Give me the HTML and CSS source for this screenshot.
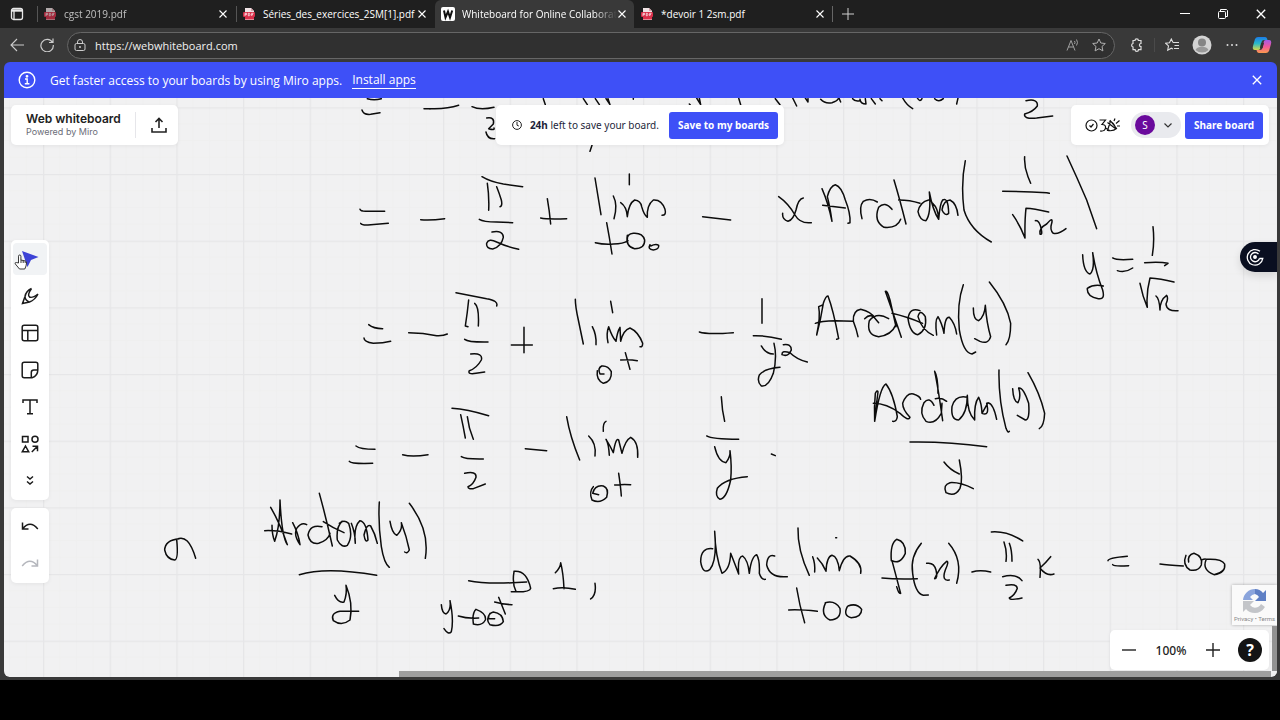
FILE: index.html
```html
<!DOCTYPE html>
<html lang="en">
<head>
    <meta charset="UTF-8">
    <meta name="viewport" content="width=device-width, initial-scale=1.0">
    <title>Whiteboard for Online Collaboration</title>
    <link rel="stylesheet" href="styles.css">
</head>
<body>
    <!-- Shared symbols -->
    <svg class="symbols" aria-hidden="true">
        <symbol id="pdf" viewBox="0 0 14 14">
            <path d="M3 1h6l3 3v9H3z" fill="#f0e4e6"/>
            <path d="M9 1l3 3H9z" fill="#d9a3ab"/>
            <rect x="1" y="5" width="12" height="5" rx="1" fill="#d9304a"/>
            <path d="M3 9V6.300h1.500v1.400H3M6.300 6.300v2.500h1l.6-.6V7l-.6-.7zM9.700 9V6.300h1.800M9.700 7.600h1.300" fill="none" stroke="#fff" stroke-width=".7"/>
            <path d="M3 10h9v2.500H3z" fill="#d9304a"/>
        </symbol>
        <symbol id="cross" viewBox="0 0 10 10">
            <path d="M1.500 1.500l7 7M8.500 1.500l-7 7" fill="none" stroke="currentColor" stroke-width="1.100"/>
        </symbol>
    </svg>

    <div class="browser">
        <div class="tab-strip">
            <button class="tab-menu" aria-label="Tab actions">
                <svg width="14" height="14" viewBox="0 0 14 14" fill="none" stroke="#e8e8e8" stroke-width="1.300"><rect x="1.500" y="1.500" width="11" height="11" rx="2"/><path d="M2 3.500h10" stroke-width="2.400"/><path d="M4 4v8"/></svg>
            </button>
            <div class="tab tab-dim">
                <svg class="favicon"><use href="#pdf"/></svg>
                <span class="tab-title">cgst 2019.pdf</span>
                <button class="tab-close" aria-label="Close tab"><svg width="10" height="10"><use href="#cross"/></svg></button>
            </div>
            <div class="tab">
                <svg class="favicon"><use href="#pdf"/></svg>
                <span class="tab-title">Séries_des_exercices_2SM[1].pdf</span>
                <button class="tab-close" aria-label="Close tab"><svg width="10" height="10"><use href="#cross"/></svg></button>
            </div>
            <div class="tab tab-active">
                <svg class="favicon" viewBox="0 0 14 14"><rect width="14" height="14" rx="2" fill="#fff"/><path d="M3 3.500l1.500 7L7 4.500l2 6L11.200 3.500" fill="none" stroke="#111" stroke-width="2"/></svg>
                <span class="tab-title tab-fade">Whiteboard for Online Collaborat</span>
                <button class="tab-close" aria-label="Close tab"><svg width="10" height="10"><use href="#cross"/></svg></button>
            </div>
            <div class="tab tab-last">
                <svg class="favicon"><use href="#pdf"/></svg>
                <span class="tab-title">*devoir 1 2sm.pdf</span>
                <button class="tab-close" aria-label="Close tab"><svg width="10" height="10"><use href="#cross"/></svg></button>
            </div>
            <button class="new-tab" aria-label="New tab">
                <svg width="12" height="12" viewBox="0 0 12 12" stroke="#d0d0d0"><path d="M6 0v12M0 6h12"/></svg>
            </button>
            <div class="window-controls">
                <button aria-label="Minimize"><svg width="10" height="10" stroke="#fff"><path d="M0 4.500h10"/></svg></button>
                <button aria-label="Restore"><svg width="10" height="10" fill="none" stroke="#fff"><rect x=".5" y="2.500" width="7" height="7" rx="1"/><path d="M2.500 2V.5h6l1 1v6H8"/></svg></button>
                <button aria-label="Close window"><svg width="12" height="12"><use href="#cross"/></svg></button>
            </div>
        </div>

        <div class="toolbar">
            <button aria-label="Back"><svg width="14" height="14" viewBox="0 0 14 14" fill="none" stroke="#ccc" stroke-width="1.100"><path d="M14 7H1M7 1L1 7l6 6"/></svg></button>
            <button aria-label="Refresh"><svg width="14" height="14" viewBox="0 0 14 14" fill="none" stroke="#ccc" stroke-width="1.200"><path d="M12.500 4.500A6.200 6.200 0 1 0 13.300 7M13 .5v4H9"/></svg></button>
            <div class="address">
                <svg width="12" height="12" viewBox="0 0 12 12" fill="none" stroke="#ccc"><rect x="1" y="4.500" width="10" height="7" rx="1.500"/><path d="M3.500 4.500V3a2.500 2.500 0 0 1 5 0v1.500"/><circle cx="6" cy="8" r=".6" fill="#ccc"/></svg>
                <input class="url" type="text" value="https://webwhiteboard.com" aria-label="Address">
                <button aria-label="Read aloud"><svg width="14" height="14" viewBox="0 0 14 14" fill="none" stroke="#a0a0a0"><path d="M1 12.500L5 2.500l4 10M2.500 9h5M8.500 3q1 1.500 0 3M10.500 1.500q2 3 0 6"/></svg></button>
                <button aria-label="Add to favorites"><svg width="14" height="14" viewBox="0 0 14 14" fill="none" stroke="#b0b0b0"><path d="M7 1l1.800 4 4.500.5-3.300 3 .9 4.400L7 10.700l-3.900 2.200L4 8.500l-3.300-3L5.200 5z"/></svg></button>
            </div>
            <button aria-label="Extensions"><svg width="14" height="14" viewBox="0 0 14 14" fill="none" stroke="#ddd" stroke-width="1.200"><path d="M3 2.500h2a1.700 1.700 0 0 1 3.400 0H11v3a1.600 1.600 0 0 0 0 3.200v3H8.500a1.700 1.700 0 0 1-3.400 0H3V9a1.800 1.800 0 0 1 0-3.500z"/></svg></button>
            <span class="divider"></span>
            <button aria-label="Favorites"><svg width="14" height="14" viewBox="0 0 14 14" fill="none" stroke="#ddd" stroke-width="1.100"><path d="M8 4.500h6M9.500 7.500H14M9 10.500h5M8 4.500L6.300 1 4.500 4.700.6 5.200l2.900 2.700-.8 4.300 3.600-2L8 11"/></svg></button>
            <button aria-label="Profile"><svg width="20" height="20" viewBox="0 0 20 20"><circle cx="10" cy="10" r="9.500" fill="#d4d4d4"/><circle cx="10" cy="7.500" r="4" fill="#858585"/><path d="M3.500 15a7 5 0 0 1 13 0 9.500 9.500 0 0 1-13 0" fill="#999"/></svg></button>
            <button aria-label="Settings and more"><svg width="12" height="4" fill="#ddd"><circle cx="1.500" cy="2" r="1"/><circle cx="6" cy="2" r="1"/><circle cx="10.500" cy="2" r="1"/></svg></button>
            <button aria-label="Copilot">
                <svg width="20" height="20" viewBox="0 0 20 20">
                    <defs>
                        <linearGradient id="cool" x2="0" y2="1"><stop offset="0" stop-color="#1c7be8"/><stop offset=".5" stop-color="#29b9c9"/><stop offset="1" stop-color="#d8d94a"/></linearGradient>
                        <linearGradient id="warm" x2="0" y2="1"><stop offset="0" stop-color="#a25be8"/><stop offset=".5" stop-color="#f0589c"/><stop offset="1" stop-color="#fb9a4b"/></linearGradient>
                    </defs>
                    <path d="M6 2h7q2 0 2.500 3H12q-2 0-2.500 2L8 14q-.5 1-2 1H3q-3 0-2-4l2-7q1-2 3-2" fill="url(#cool)"/>
                    <path d="M14 18H7q-2 0-2.500-3H8q2 0 2.500-2L12 6q.5-1 2-1h3q3 0 2 4l-2 7q-1 2-3 2" fill="url(#warm)"/>
                    <path d="M9 8h3l-1.500 5H8z" fill="#333"/>
                </svg>
            </button>
        </div>

        <div class="page">
            <div class="banner">
                <svg width="18" height="18" viewBox="0 0 18 18" fill="none" stroke="#fff" stroke-width="1.400"><circle cx="9" cy="9" r="7.800"/><path d="M7 8h2.200v4.500M6.800 12.700h4.600"/><circle cx="9" cy="5.300" r=".7" fill="#fff"/></svg>
                <span>Get faster access to your boards by using Miro apps.</span>
                <a class="install" href="#">Install apps</a>
                <button class="banner-close" aria-label="Dismiss"><svg width="12" height="12"><use href="#cross"/></svg></button>
            </div>

            <main class="board">
                <!-- Grid and pen strokes, three units to the pixel -->
                <svg class="canvas" role="img" aria-label="Handwritten limit calculation">
                    <g transform="translate(-4 -98) scale(.33333)">
                        <pattern id="grid" x="129" y="122" width="200" height="200" patternUnits="userSpaceOnUse">
                            <path d="M50 0V200M100 0V200M150 0V200M0 50H200M0 100H200M0 150H200" stroke="#efefef" stroke-width="3"/>
                            <path d="M2 0V200M0 2H200" stroke="#e6e6e8" stroke-width="4"/>
                        </pattern>
                        <rect width="6000" height="4000" fill="url(#grid)"/>

                        <g class="ink">
                            <!-- line scrolled under the header -->
                            <path d="M1102 296Q1122 302 1144 296M1086 330Q1090 345 1112 343L1140 338M1272 326H1290"/>
                            <g transform="translate(1290 0)">
                                <path d="M0 326Q50 328 86 316M126 320Q150 332 192 322M170 354Q195 350 190 372L176 386Q195 392 192 384M168 396Q172 418 194 416"/>
                                <path d="M340 296L346 314M460 296L472 314M496 296L508 314M528 296L540 314L534 296M610 294V298M778 312l3 3M800 294L812 314L808 294M926 294L932 314M1036 296L1050 314M1088 294L1100 318M1126 294L1134 306V296M1172 298Q1185 312 1206 308Q1226 302 1226 292L1232 306M1268 296Q1276 306 1290 302M486 436L480 454"/>
                            </g>
                            <g transform="translate(2580 0)">
                                <path d="M0 298Q2 312 18 312L16 296M34 296L46 312M60 296L66 302M128 294Q140 316 158 326M172 294Q180 308 186 296M224 296Q236 308 250 296M294 294L290 312"/>
                                <path d="M498 302Q535 295 532 318Q520 335 494 342Q490 358 530 354L578 348"/>
                            </g>

                            <!-- lines 1 and 2, left half -->
                            <g transform="translate(1020 450)">
                                <path d="M60 178Q62 184 76 184L134 184M62 220Q66 226 84 225L145 220M242 209Q270 212 314 206"/>
                                <path d="M426 80Q450 95 490 102L548 110M442 100Q448 140 446 181M470 110Q478 130 484 150Q488 168 480 170M418 208Q430 216 470 216L518 218"/>
                                <path d="M456 246Q490 240 490 262Q484 290 458 297Q438 296 440 280Q446 264 470 276Q500 290 536 298M622 146Q628 180 632 222M602 204Q620 208 680 206"/>
                                <path d="M765 84L783 194M820 138Q834 165 822 206M868 72V104M842 158Q860 170 862 200Q866 160 884 150Q902 152 905 170Q912 195 922 202Q920 165 940 150Q965 148 975 178Q980 196 966 196"/>
                                <path d="M800 218Q808 260 816 312M766 278Q790 284 820 282Q850 282 864 272M862 256Q856 290 884 296Q915 296 914 270Q908 248 880 250Q860 252 862 270M930 284Q922 298 940 300Q958 298 956 286Q948 280 932 288"/>
                                <path d="M86 524Q100 536 128 536M72 564Q72 576 100 580Q130 580 152 574M206 548Q250 548 290 557Q310 558 322 552"/>
                                <path d="M348 428Q400 438 440 446Q476 452 470 468M386 450Q382 490 376 528L384 530M404 460Q418 470 415 528M374 568Q385 577 444 576M392 612Q430 608 424 630Q410 655 388 662Q382 674 408 670L434 666M552 532V608M514 585H577"/>
                                <path d="M706 448Q706 470 715 510L730 582M757 530Q770 555 768 584M812 454L818 488M804 578Q798 550 806 530Q816 560 828 574Q832 545 840 532L842 574Q850 540 870 534Q895 545 908 580Q908 592 900 590"/>
                                <path d="M856 608L870 658M842 630Q870 628 892 632M772 662Q768 690 790 700Q816 695 814 665Q804 646 785 648Q772 655 780 672L792 672"/>
                            </g>

                            <!-- lines 1 and 2, right half -->
                            <g transform="translate(2070 450)">
                                <path d="M38 200L122 210M266 140Q295 160 315 195Q330 222 364 218M340 144Q325 146 318 180Q310 210 294 214Q276 208 278 190"/>
                                <path d="M396 116Q415 160 426 214Q420 170 412 140Q420 108 436 104Q455 110 466 150Q482 190 480 218L474 220M398 166L466 174M516 206Q506 170 520 154Q540 142 562 156"/>
                                <path d="M606 178Q584 152 566 172Q550 214 582 232Q622 236 632 208M612 90Q630 150 648 222M626 150Q660 150 690 160"/>
                                <path d="M716 150Q690 155 684 185Q690 212 708 212Q724 190 718 126Q728 180 746 208M728 160Q745 175 746 208Q750 160 758 150Q775 140 776 190Q765 200 756 180Q760 152 780 150Q800 160 804 196"/>
                                <path d="M826 32Q812 100 822 180Q840 240 904 276M1004 20Q1002 50 1014 80L1022 100M938 124Q1010 124 1070 128L1078 130M968 194Q990 225 1005 264Q1004 210 1008 175Q1030 176 1076 186"/>
                                <path d="M28 546Q50 554 130 548M216 446V520M190 557Q230 556 274 568M214 588Q228 612 250 612M252 580Q262 620 250 670Q235 712 214 708Q200 695 208 675Q225 655 270 652M280 584Q304 580 304 600Q295 622 276 614Q275 600 300 608Q320 628 352 636"/>
                                <path d="M386 470Q392 500 380 555Q392 510 400 460Q408 436 414 438Q430 480 446 566L440 568M386 470L398 465M376 520Q400 508 490 514M504 560Q500 540 490 514Q488 482 512 478Q544 486 554 504L566 518"/>
                                <path d="M524 506Q540 490 552 502M596 506Q560 484 538 512Q528 556 566 560Q604 556 618 524M634 562Q620 520 586 424Q592 420 600 450L618 530M606 490Q650 500 698 520"/>
                                <path d="M690 482Q660 470 654 505Q660 550 684 554Q712 540 706 500Q690 475 684 500Q695 540 730 556M740 555Q734 510 744 500Q756 520 762 550Q764 500 778 502Q795 520 800 552"/>
                                <path d="M820 404Q800 460 808 540Q820 610 846 612L857 606M850 474Q850 510 866 512Q884 500 886 466Q890 520 902 560Q895 584 870 574L854 566M898 396Q950 460 962 520Q962 570 948 584"/>
                            </g>
                            <g transform="translate(3060 450)">
                                <path d="M46 212Q58 210 64 238Q68 256 60 252Q56 235 80 222Q98 200 96 216Q88 240 100 250Q115 254 138 236M141 18Q170 80 200 150L230 236"/>
                                <path d="M188 314Q190 365 210 372Q225 360 218 308Q228 370 248 420Q256 450 235 446Q200 440 202 415Q220 402 250 408M278 324Q290 332 338 328M292 362Q315 370 338 354"/>
                                <path d="M399 230Q404 275 397 316M374 338Q420 334 444 340L434 347M360 400Q368 440 382 472Q378 430 390 384Q420 386 462 396M408 438Q418 445 420 480Q420 450 440 436Q446 445 438 462Q440 485 474 482"/>
                            </g>

                            <!-- line 3, left half -->
                            <g transform="translate(1020 1170)">
                                <path d="M48 168Q60 178 105 178M28 214Q32 222 98 220M188 194Q215 202 264 194M336 55Q380 58 446 77M362 74Q370 110 376 144M382 80Q386 115 400 148M364 200Q375 208 430 207M374 250Q410 242 408 262Q400 285 384 290Q384 298 400 296L436 282M556 176L620 182"/>
                                <path d="M680 80Q690 140 719 210M746 138Q770 160 765 198M798 94Q788 98 790 124M808 196Q806 160 798 148Q812 170 820 188Q828 140 836 150Q842 175 846 190Q856 150 872 142Q896 155 893 202"/>
                                <path d="M836 250Q842 290 844 318M824 285Q850 282 872 284M760 290Q746 305 756 330Q780 342 800 322Q808 295 790 288Q765 284 758 310L776 314"/>
                                <path d="M1144 20Q1146 60 1154 94M1100 138Q1115 148 1196 148M1124 170Q1134 215 1158 218Q1172 200 1170 182Q1176 230 1172 270Q1160 325 1140 328Q1124 320 1132 295Q1155 265 1222 260"/>
                            </g>

                            <!-- line 3, right half, and the conclusion -->
                            <g transform="translate(2040 1080)">
                                <path d="M274 282L286 287M584 184Q582 140 586 100Q592 88 594 96Q588 140 584 184Q600 80 618 72Q640 100 652 170Q650 186 638 184M580 130Q620 130 660 160Q685 185 690 172Q668 150 668 130Q680 98 700 102Q720 108 722 118"/>
                                <path d="M762 136Q748 108 732 128Q716 160 738 184Q764 196 784 160L786 130M764 34Q774 80 788 182M764 34Q774 50 774 100M766 116Q785 112 800 124"/>
                                <path d="M862 112Q826 104 816 140Q812 180 836 180Q862 160 862 106Q862 160 884 180Q882 130 896 112Q905 130 906 160Q912 150 924 128Q940 130 950 178M906 160Q930 170 920 130"/>
                                <path d="M957 30Q955 120 978 205Q984 220 988 214M998 86Q1000 125 1014 128Q1024 110 1016 84Q1030 80 1046 130Q1050 180 1036 180L1012 166M1044 38Q1080 100 1094 160Q1092 200 1078 206"/>
                                <path d="M690 246Q800 244 920 260M792 306Q810 330 838 342M838 300Q850 360 840 385Q825 412 798 398Q788 375 810 368Q840 366 880 386"/>
                                <path d="M98 566Q62 562 62 605Q68 645 90 628Q112 600 104 514Q106 590 126 640Q150 630 152 580Q160 600 176 642Q172 590 188 588Q204 600 208 640Q214 590 230 584Q240 600 238 640Q244 660 256 658M284 588Q262 580 260 615Q270 655 322 650"/>
                                <path d="M354 504Q352 570 388 646M398 590Q406 610 404 636M467 533h3M412 594Q428 610 438 634Q440 590 456 586Q474 590 478 632Q490 585 510 588Q548 610 542 640"/>
                                <path d="M350 684Q358 735 374 788M326 750Q360 748 412 754M436 730Q420 765 450 780Q485 778 480 745Q465 720 436 728M502 740Q488 768 514 773Q545 772 545 748Q530 728 504 738"/>
                                <path d="M634 602Q630 550 650 538Q678 545 676 580Q660 615 636 602L662 700Q656 702 650 680M606 654Q650 658 712 656M724 550Q690 590 698 640Q705 700 730 706L745 705"/>
                                <path d="M740 610Q762 606 768 630Q774 656 764 656Q780 620 800 604Q808 604 796 630Q784 664 808 660M806 550Q850 600 830 670M876 636Q900 628 932 636"/>
                                <path d="M934 516Q980 512 1028 543M972 546Q982 575 978 604M988 550Q996 570 996 604M968 650Q1010 640 1026 662M978 676Q1010 670 1012 685Q1005 705 988 714Q990 722 1026 714M1074 598Q1084 605 1080 652M1112 590Q1100 605 1080 624Q1100 650 1122 642"/>
                            </g>
                            <g transform="translate(3120 1590)">
                                <path d="M204 92Q205 84 262 79M218 104Q222 110 266 107M360 102Q380 105 430 108M446 96Q442 75 462 70Q490 80 484 105Q475 125 450 120Q426 105 438 76M484 90Q500 84 498 90Q486 120 522 134Q558 128 554 102Q545 85 498 88"/>
                            </g>

                            <!-- bottom left -->
                            <g transform="translate(420 1440)">
                                <path d="M118 176Q75 180 74 210Q80 238 104 240Q116 238 110 178Q145 160 167 235"/>
                                <path d="M392 82Q420 130 442 194Q425 170 420 60Q420 140 404 184Q396 165 396 136M374 152Q410 150 455 162M458 128Q475 160 480 194Q460 165 470 145Q485 125 500 134"/>
                                <path d="M546 140Q510 132 504 165Q510 194 536 190Q565 180 570 160M538 40Q560 120 577 198M550 125Q580 145 612 158M606 124Q588 140 592 180Q605 205 622 196Q640 170 626 130Q612 118 598 130"/>
                                <path d="M634 130Q646 160 646 190Q640 140 660 122Q680 125 684 180Q676 190 672 165Q680 130 692 138Q705 160 712 190M718 66Q714 130 724 200Q732 250 748 262M750 124Q756 160 770 166Q788 150 784 128Q800 170 808 210Q802 222 794 216M808 70Q870 150 856 235"/>
                                <path d="M478 284Q560 260 710 286M584 346Q596 370 612 366Q622 340 618 316Q640 370 630 420Q605 440 580 422Q570 400 600 394L656 394"/>
                                <path d="M986 302Q1040 314 1160 306M1122 276Q1116 310 1128 334M1122 274Q1160 270 1172 325Q1170 338 1114 335M1246 278Q1262 262 1262 248Q1270 280 1272 326M1240 326Q1270 320 1306 328M1365 310Q1370 345 1352 357"/>
                                <path d="M904 374Q906 400 918 402Q934 390 930 362Q942 420 934 455Q925 466 912 446M955 408Q980 416 1016 414M1000 430Q996 400 1008 388Q1040 400 1036 420Q1025 440 1000 432M1050 400Q1036 420 1050 434Q1080 442 1090 425Q1088 400 1060 396Q1044 400 1046 416L1064 416M1076 352L1096 402M1064 366Q1090 374 1116 374"/>
                            </g>
                        </g>
                    </g>
                </svg>

                <header class="board-header">
                    <div class="panel title-panel">
                        <div class="board-name">
                            <h1>Web whiteboard</h1>
                            <p>Powered by Miro</p>
                        </div>
                        <button class="export" aria-label="Export">
                            <svg width="16" height="16" viewBox="0 0 16 16" fill="none" stroke="#222" stroke-width="1.600"><path d="M8 11V1.500M4.500 5L8 1.500 11.500 5M1 11v4h14v-4"/></svg>
                        </button>
                    </div>
                    <div class="panel save-panel">
                        <svg width="10" height="10" viewBox="0 0 10 10" fill="none" stroke="#222"><circle cx="5" cy="5" r="4.400"/><path d="M5 2v3.200l1.800.8"/></svg>
                        <span class="save-text"><b>24h</b> left to save your board.</span>
                        <button class="btn-primary">Save to my boards</button>
                    </div>
                    <div class="panel share-panel">
                        <button class="facilitation" aria-label="Timer, reactions and more">
                            <svg width="36" height="16" viewBox="0 0 36 16" fill="none" stroke="#111" stroke-width="1.200">
                                <circle cx="6.500" cy="8.500" r="5.500"/><path d="M4.500 8.500l1.500 1.500L8.500 7"/>
                                <path d="M14.500 3h6l-3.500 4.500q4 0 3.500 3.500T15 14"/>
                                <path d="M22.500 13.500q6 1 9-2l-6-7.500zM22.500 5.500L31 12M20.500 11l4 2.500M24 4q5 1 6.500 7M29 4l1-2.500M31 6.500l3.500-3M32 9h3"/>
                            </svg>
                        </button>
                        <button class="user">
                            <span class="avatar">S</span>
                            <svg width="8" height="5" fill="none" stroke="#333" stroke-width="1.200"><path d="M.5.5L4 4 7.500.5"/></svg>
                        </button>
                        <button class="btn-primary">Share board</button>
                    </div>
                </header>

                <nav class="tools">
                    <div class="panel tool-group">
                        <button class="selected" aria-label="Select"><svg width="18" height="18" viewBox="0 0 18 18"><path d="M1 1l16.500 6-7.500 3-3.500 7z" fill="#3d43d6"/></svg></button>
                        <button aria-label="Pen"><svg viewBox="0 0 18 18"><path d="M10.500 1.500Q5 4 4 9.500L1.500 16.500 8.500 15Q14 13 17 7M4 9.500Q4 13 8 15M10.500 1.500Q6 8 8.500 10Q11 11.500 17 7"/></svg></button>
                        <button aria-label="Templates"><svg viewBox="0 0 18 18"><rect x="1.200" y="1.200" width="15.600" height="15.600" rx="2"/><path d="M1 6.500h16M6.800 6.500V17"/></svg></button>
                        <button aria-label="Sticky note"><svg viewBox="0 0 18 18"><path d="M16.800 9V3.200q0-2-2-2H3.200q-2 0-2 2v11.600q0 2 2 2H11q5.800-1.800 5.800-7.800h-4q-2.500 0-2.500 2.500v5"/></svg></button>
                        <button aria-label="Text"><svg viewBox="0 0 18 18"><path d="M2 5V2h14v3M9 2v13.500M6 15.800h6"/></svg></button>
                        <button aria-label="Shapes"><svg viewBox="0 0 18 18"><rect x="1.500" y="1.500" width="5.500" height="5.500"/><circle cx="14" cy="4.300" r="3"/><path d="M4.500 11l3.200 5.800H1.200zM11.500 11.300h5v5M16.500 11.300L10.800 17"/></svg></button>
                        <button aria-label="More tools"><svg viewBox="0 0 18 18"><path d="M6 4.500l3 2.500 3-2.500M6 9.500l3 2.500 3-2.500"/></svg></button>
                    </div>
                    <div class="panel tool-group">
                        <button aria-label="Undo"><svg viewBox="0 0 18 18"><path d="M1.500 4.500v6.500h6M1.500 11Q9 1.500 16.800 11"/></svg></button>
                        <button class="disabled" aria-label="Redo" disabled><svg viewBox="0 0 18 18"><path d="M16.500 4.500v6.500h-6M16.500 11Q9 1.500 1.200 11"/></svg></button>
                    </div>
                    <svg class="pointer" width="14" height="16" viewBox="0 0 14 16"><path d="M4.500 9V2.200a1.200 1.200 0 0 1 2.400 0V6l4.500 1q1.200.4 1.100 2l-.5 3-1.200 3H5.500L1.200 9.800q-.4-1.500 1.200-1.300zM7 6v3M9.200 6.700V9M11.200 7.300V9" fill="#fff" stroke="#222" stroke-width=".9"/></svg>
                </nav>

                <button class="side-handle" aria-label="Open assistant">
                    <svg width="18" height="18" viewBox="0 0 18 18" fill="none" stroke="#fff" stroke-width="1.300"><path d="M14 3.300A7.800 7.800 0 1 0 16.800 10.500H13.500M12.500 6A4.600 4.600 0 1 0 13.500 10.500"/><circle cx="9" cy="9" r="1.300" fill="#fff"/></svg>
                </button>

                <div class="recaptcha">
                    <svg width="26" height="26" viewBox="0 0 26 26">
                        <path d="M1 12A12 12 0 0 1 13 1v5a7 7 0 0 0-5 3l3 3z" fill="#8aa4dc"/>
                        <path d="M13 1q5 0 8 4l3-3v11H13l4-4q-1-2-4-3z" fill="#5f7fc4"/>
                        <path d="M1 13h11l-4 4q3 4 8 2 2-1 3-3l4 3q-4 6-10 6-6 0-9-4l-3 3z" fill="#c3c5c9"/>
                    </svg>
                    <span><a href="#">Privacy</a> • <a href="#">Terms</a></span>
                </div>

                <div class="panel zoom-panel">
                    <button aria-label="Zoom out"><svg width="14" height="14" stroke="#222" stroke-width="1.400"><path d="M0 7h14"/></svg></button>
                    <span class="zoom-value">100%</span>
                    <button aria-label="Zoom in"><svg width="14" height="14" stroke="#222" stroke-width="1.400"><path d="M0 7h14M7 0v14"/></svg></button>
                    <button class="help" aria-label="Help">?</button>
                </div>

                <div class="scroll-y"></div>
                <div class="scroll-x"></div>
            </main>
        </div>
    </div>
    <div class="taskbar"></div>
</body>
</html>
```
FILE: styles.css
```css
:root {
    --blue: #3e50f7;
    --chrome-dark: #1f1f1f;
    --chrome: #393939;
    --board: #f1f1f2;
    --ink: #0c0c0c;
}

* {
    margin: 0;
    padding: 0;
    box-sizing: border-box;
}

body {
    display: flex;
    flex-direction: column;
    height: 100vh;
    overflow: hidden;
    background: #000;
    font-family: "Noto Sans", sans-serif;
    font-size: 12px;
}

button {
    display: flex;
    align-items: center;
    justify-content: center;
    border: none;
    background: none;
    color: inherit;
    font-family: inherit;
    cursor: pointer;
}

.symbols {
    position: absolute;
    width: 0;
    height: 0;
}

/* Browser window */
.browser {
    flex: 1;
    min-height: 0;
    display: flex;
    flex-direction: column;
    background: var(--chrome);
    color: #fff;
}

.taskbar {
    height: 40px;
}

.tab-strip {
    display: flex;
    height: 28px;
    background: var(--chrome-dark);
}

.tab-menu {
    width: 37px;
    padding-right: 4px;
}

.tab {
    flex: 0 1 199px;
    min-width: 0;
    display: flex;
    align-items: center;
    padding: 0 8px 0 6px;
    background: linear-gradient(#555, #555) left center / 1px 16px no-repeat;
    font-family: "Open Sans", sans-serif;
    font-size: 10px;
}

.tab-dim .favicon,
.tab-dim .tab-title {
    opacity: 0.7;
}

.tab-active {
    background: var(--chrome);
    border-radius: 6px 6px 0 0;
}

.tab-last {
    background: linear-gradient(#666, #666) right center / 1px 16px no-repeat;
}

.favicon {
    flex: none;
    width: 14px;
    height: 14px;
    margin-right: 7px;
}

.tab-title {
    flex: 1;
    white-space: nowrap;
}

.tab-fade {
    mask-image: linear-gradient(to right, #000 85%, transparent);
}

.new-tab {
    width: 30px;
}

.window-controls {
    display: flex;
    margin-left: auto;
}

.window-controls button {
    width: 38px;
}

.toolbar {
    display: flex;
    align-items: center;
    height: 34px;
    padding: 0 3px 0 2px;
}

.toolbar > button {
    width: 30px;
    height: 30px;
}

.address {
    flex: 1;
    display: flex;
    align-items: center;
    height: 27px;
    margin: 0 7px 0 5px;
    padding: 0 8px 0 6px;
    border: 1px solid #666;
    border-radius: 14px;
    background: #303030;
}

.url {
    flex: 1;
    margin-left: 9px;
    border: none;
    outline: none;
    background: none;
    color: #f0f0f0;
    font-family: "Open Sans", sans-serif;
    font-size: 11px;
}

.address button {
    width: 27px;
}

.address button:last-child {
    width: 14px;
    margin-left: 6px;
}

.divider {
    width: 1px;
    height: 14px;
    margin: 0 2px;
    background: #4a4a4a;
}

/* Page */
.page {
    flex: 1;
    min-height: 0;
    display: flex;
    flex-direction: column;
    margin: 0 3px 3px 4px;
    border-radius: 6px;
    overflow: hidden;
}

.banner {
    display: flex;
    align-items: center;
    height: 36px;
    padding: 0 14px;
    background: var(--blue);
    font-family: "Open Sans", sans-serif;
}

.banner span {
    margin: 0 10px 0 14px;
}

.install {
    color: #fff;
    text-decoration: none;
    border-bottom: 1px solid #fff;
    line-height: 16px;
}

.banner-close {
    margin-left: auto;
}

.board {
    flex: 1;
    min-height: 0;
    position: relative;
    background: var(--board);
    color: #222;
    overflow: hidden;
}

.canvas {
    display: block;
    width: 100%;
    height: 100%;
}

.ink {
    fill: none;
    stroke: var(--ink);
    stroke-width: 4.5;
    stroke-linecap: round;
    stroke-linejoin: round;
}

.panel {
    background: #fff;
    border-radius: 5px;
    box-shadow: 0 1px 4px rgba(0, 0, 0, 0.06);
}

.board-header {
    position: absolute;
    top: 7px;
    left: 7px;
    right: 8px;
    display: grid;
    grid-template-columns: 1fr auto 1fr;
}

.board-header .panel {
    display: flex;
    align-items: center;
    height: 40px;
}

.title-panel {
    justify-self: start;
}

.board-name {
    padding: 0 14px 0 15px;
    border-right: 1px solid #e6e6ea;
    font-family: Inter, sans-serif;
}

.board-name h1 {
    font-size: 12px;
    font-weight: 600;
    line-height: 14px;
}

.board-name p {
    color: #6b6d78;
    font-size: 9px;
    line-height: 12px;
}

.export {
    width: 42px;
    padding-left: 4px;
}

.save-panel {
    padding: 0 6px 0 16px;
}

.save-text {
    margin: 0 10px 0 8px;
    color: #1e1f3a;
    font-size: 10px;
}

.btn-primary {
    height: 27px;
    padding: 0 9px;
    border-radius: 3px;
    background: var(--blue);
    color: #fff;
    font-size: 10px;
    font-weight: 700;
}

.share-panel {
    justify-self: end;
    padding: 0 6px 0 14px;
}

.user {
    gap: 9px;
    height: 26px;
    margin: 0 4px 0 10px;
    padding: 0 9px 0 4px;
    border-radius: 13px;
    background: #e9eaee;
}

.avatar {
    width: 20px;
    height: 20px;
    border-radius: 50%;
    background: #6a0a9c;
    color: #fff;
    font-size: 10px;
    line-height: 20px;
}

/* Left toolbar */
.tools {
    position: absolute;
    top: 142px;
    left: 7px;
    display: flex;
    flex-direction: column;
    gap: 8px;
}

.tool-group {
    display: flex;
    flex-direction: column;
    gap: 5px;
    padding: 3px 2px;
}

.tool-group button {
    width: 34px;
    height: 32px;
    border-radius: 4px;
}

.tool-group svg {
    width: 18px;
    height: 18px;
    fill: none;
    stroke: #1a1a1a;
    stroke-width: 1.5;
}

.tool-group .selected {
    background: #f1f3f5;
}

.tool-group .selected svg {
    stroke: none;
}

.tool-group .disabled svg {
    stroke: #b5b7bd;
}

.pointer {
    position: absolute;
    top: 14px;
    left: 3px;
}

.side-handle {
    position: absolute;
    top: 144px;
    right: 0;
    width: 37px;
    height: 30px;
    padding-right: 8px;
    border-radius: 15px 0 0 15px;
    background: #0a0f20;
    box-shadow: 0 4px 8px rgba(0, 0, 0, 0.12);
}

.recaptcha {
    position: absolute;
    right: 0;
    bottom: 52px;
    display: flex;
    flex-direction: column;
    align-items: center;
    width: 45px;
    height: 40px;
    padding-top: 3px;
    background: #fafafa;
    box-shadow: 0 0 3px rgba(0, 0, 0, 0.3);
    color: #888;
    font-family: Roboto, sans-serif;
    font-size: 6px;
    line-height: 10px;
    white-space: nowrap;
}

.recaptcha a {
    color: inherit;
    text-decoration: none;
}

.zoom-panel {
    position: absolute;
    right: 8px;
    bottom: 7px;
    display: flex;
    align-items: center;
    height: 40px;
    padding: 0 7px 0 12px;
}

.zoom-value {
    width: 70px;
    color: #222;
    font-weight: 500;
    text-align: center;
}

.help {
    width: 24px;
    height: 24px;
    margin-left: 18px;
    border-radius: 50%;
    background: #141414;
    color: #fff;
    font-size: 16px;
    font-weight: 700;
}

.scroll-x,
.scroll-y {
    position: absolute;
    right: 0;
    bottom: 6px;
    width: 5px;
    height: 45px;
    background: #929292;
}

.scroll-x {
    right: 6px;
    bottom: 0;
    left: 31%;
    width: auto;
    height: 6px;
    background: #9e9e9e;
}
```
